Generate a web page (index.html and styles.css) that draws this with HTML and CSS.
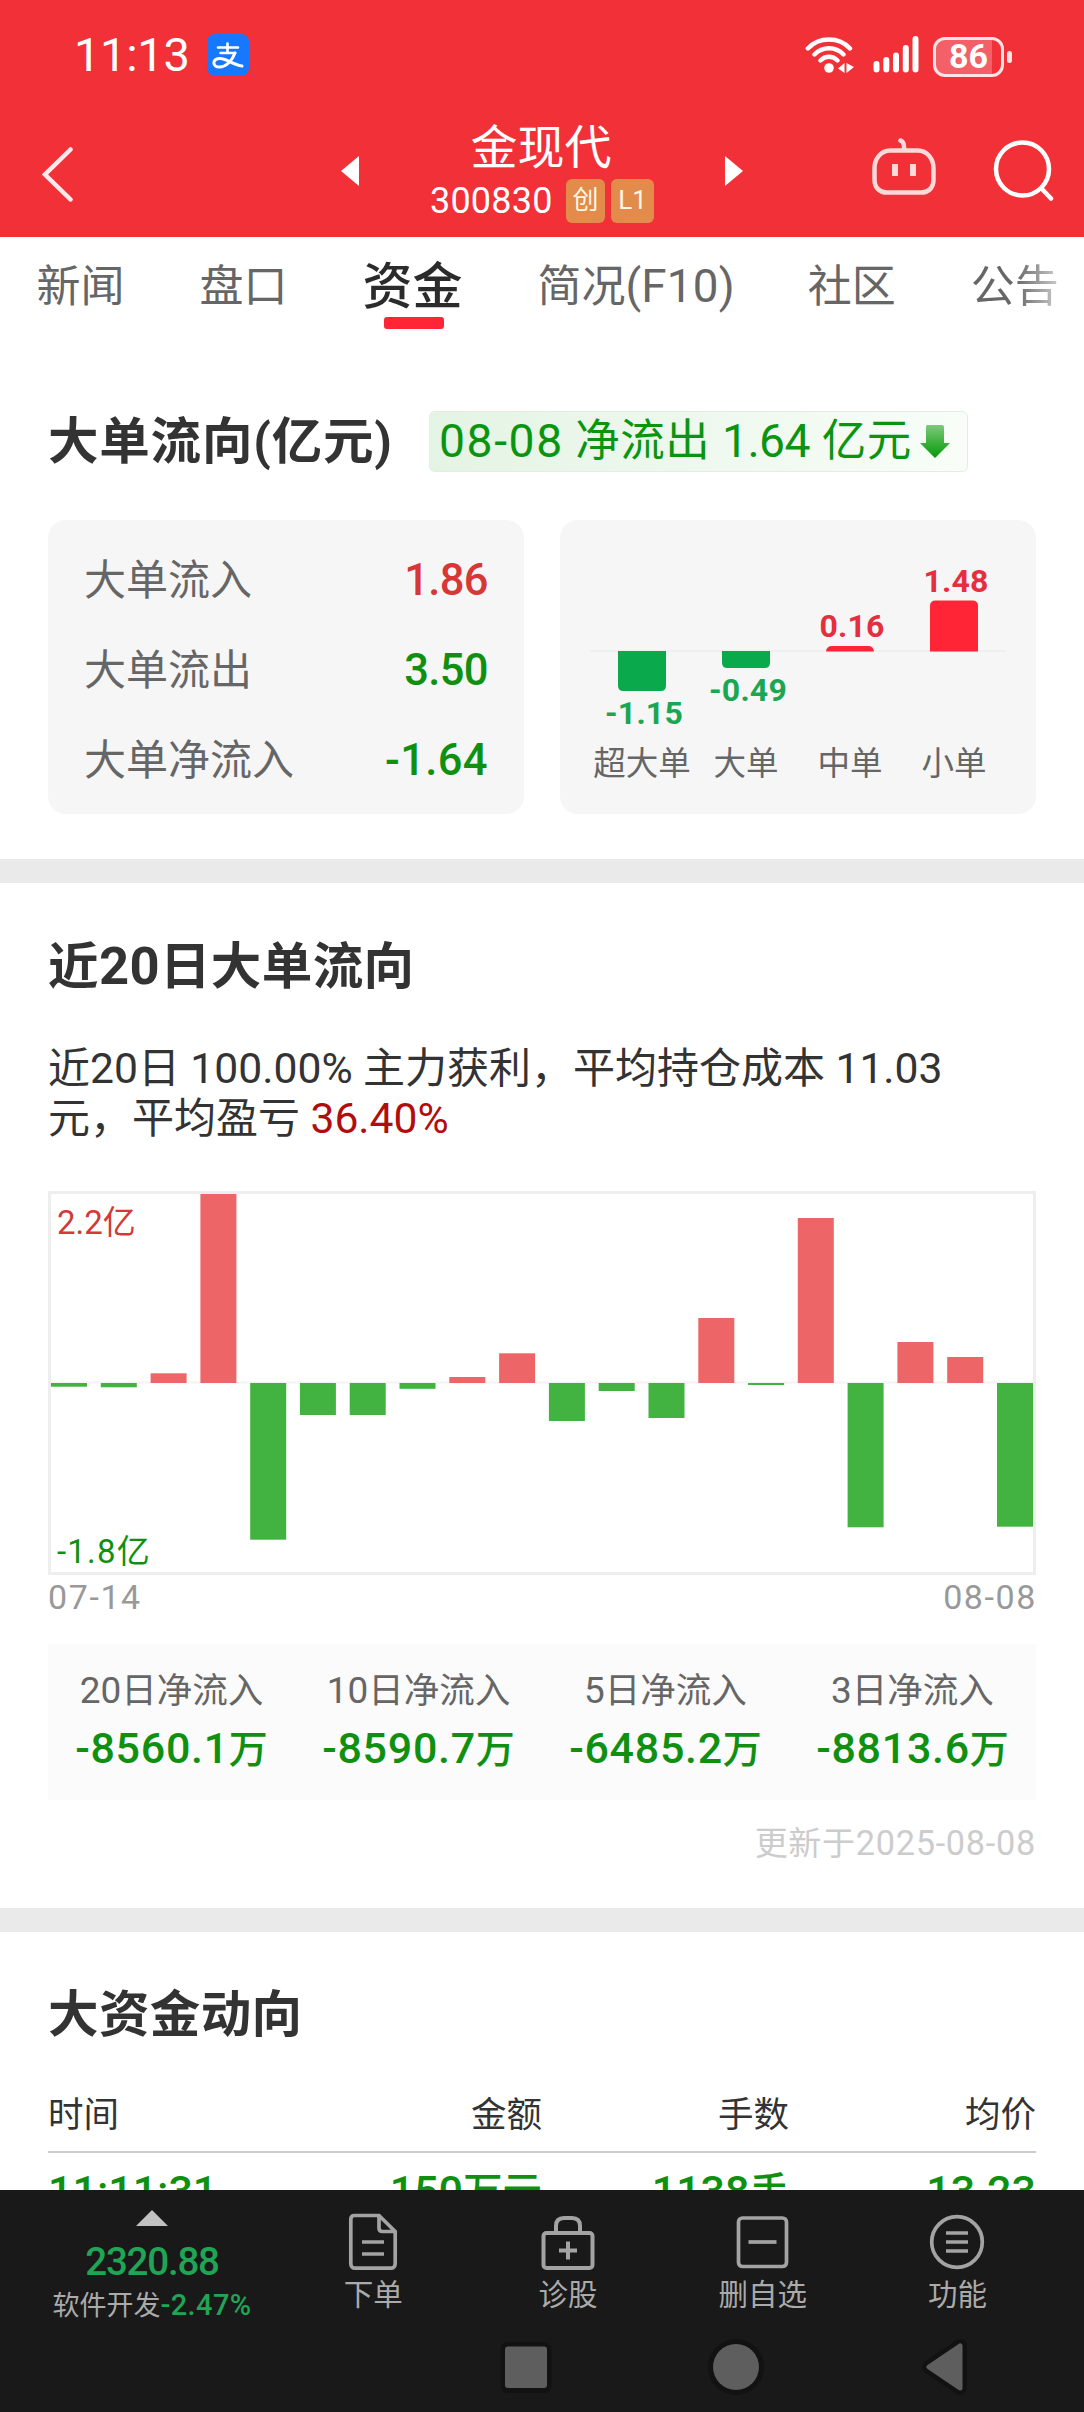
FILE: index.html
```html
<!DOCTYPE html>
<html lang="zh-CN">
<head>
<meta charset="utf-8">
<title>金现代 300830</title>
<link rel="stylesheet" href="styles.css">
</head>
<body>
<header class="header">
  <div class="status">
    <span class="clock">11:13</span>
    <svg class="alipay" width="42" height="42" viewBox="0 0 42 42" fill="none" stroke="#fff" stroke-linecap="round">
      <rect width="42" height="42" rx="8" fill="#1677ff" stroke="none"/>
      <path d="M20.500 9.500V18M11 13.500H31M13.500 19H28" stroke-width="2.600"/>
      <path d="M28 19C25 27 19 33 12.500 33C5 33 5 25 12.500 24.500C19 24 25 30.500 35 32" stroke-width="3"/>
    </svg>
    <div class="status-icons">
      <svg width="50" height="40" viewBox="0 0 50 40" fill="none" stroke="#fff" stroke-width="4.400" stroke-linecap="round">
        <path d="M2.800 13.500C14 1.500 34 1.500 45 13.500M9.500 19.500C17.500 11.200 30.500 11.200 38.500 19.500M15.500 25.500C20.500 20.500 27.500 20.500 32.500 25.500"/>
        <circle cx="24" cy="33" r="4.800" fill="#fff" stroke="none"/>
        <path d="M39.500 28V38L33 33.500ZM41.500 38V28L49 32Z" fill="#fff" stroke="none"/>
      </svg>
      <svg width="46" height="40" viewBox="0 0 46 40" stroke="#fff" stroke-width="6" stroke-linecap="round">
        <path d="M3.500 29V34.500M13.300 25V34.500M23 20.500V34.500M32.800 13V34.500M42.500 4V34.500"/>
      </svg>
      <div class="battery"><span>86</span></div>
    </div>
  </div>
  <div class="titlebar">
    <svg class="back" width="32" height="56" viewBox="0 0 32 56" fill="none" stroke="#fff" stroke-opacity=".9" stroke-width="4.500" stroke-linecap="round"><path d="M28.500 3.500L3 28.500L28.500 53.500"/></svg>
    <svg class="prev" width="18" height="30" viewBox="0 0 18 30"><path d="M18 0V30L0 15Z" fill="#fff"/></svg>
    <div class="stock">
      <h1>金现代</h1>
      <p><span class="code">300830</span><b>创</b><b>L1</b></p>
    </div>
    <svg class="next" width="18" height="30" viewBox="0 0 18 30"><path d="M0 0V30L18 15Z" fill="#fff"/></svg>
    <svg class="robot" width="64" height="58" viewBox="0 0 64 58" fill="none" stroke="#ffd9da" stroke-width="4.500" stroke-linecap="round">
      <path d="M18 12.500H46C55 12.500 61.500 21 61.500 30V42C61.500 50 56 54.500 49 54.500H15C8 54.500 2.500 50 2.500 42V30C2.500 21 9 12.500 18 12.500ZM32 12C32.500 6 31.500 3.500 28.500 2.500"/>
      <path d="M23 26V38M41 26V38" stroke-width="6" stroke-linecap="butt"/>
    </svg>
    <svg class="search" width="62" height="62" viewBox="0 0 62 62" fill="none" stroke="#fff" stroke-width="4.500" stroke-linecap="round"><circle cx="29.500" cy="30" r="26.500"/><path d="M48.500 49.500L58 59.500"/></svg>
  </div>
</header>

<main class="content">
  <nav class="tabs">
    <span>新闻</span><span>盘口</span><span class="active">资金</span><span>简况<i>(F10)</i></span><span>社区</span><span class="fade">公告</span>
  </nav>

  <section class="panel flow">
    <div class="flow-head">
      <h2>大单流向(亿元)</h2>
      <div class="tag"><i class="date">08-08</i> 净流出 <i class="amount">1.64</i> 亿元<svg width="30" height="33" viewBox="0 0 30 33"><defs><linearGradient id="down" x1="0" y1="0" x2="0" y2="1"><stop offset="0" stop-color="#7fca7c"/><stop offset="1" stop-color="#029a05"/></linearGradient></defs><path d="M7 0H22Q24 0 24 2V18H30L15 33L0 18H6V2Q6 0 7 0Z" fill="url(#down)"/></svg></div>
    </div>
    <div class="cards">
      <dl class="card totals">
        <div><dt>大单流入</dt><dd class="up">1.86</dd></div>
        <div><dt>大单流出</dt><dd>3.50</dd></div>
        <div><dt>大单净流入</dt><dd class="net">-1.64</dd></div>
      </dl>
      <svg class="card" width="476" height="294" viewBox="0 0 476 294">
        <path d="M30 131H446" stroke="#ececec" stroke-width="1.500"/>
        <g fill="#0aaa4c">
          <path d="M58 131H106V165.500Q106 171 100.500 171H63.500Q58 171 58 165.500Z"/>
          <path d="M162 131H210V142.500Q210 148 204.500 148H167.500Q162 148 162 142.500Z"/>
        </g>
        <g fill="#ff2537">
          <path d="M266 131.500Q266.500 126 272 126H308Q313.500 126 314 131.500Z"/>
          <path d="M370 131.500V86Q370 80.500 375.500 80.500H412.500Q418 80.500 418 86V131.500Z"/>
        </g>
        <g class="bar-value">
          <text x="84" y="203.500" fill="#1ba653">-1.15</text>
          <text x="188" y="181" fill="#1ba653">-0.49</text>
          <text x="292" y="117" fill="#e62f3e">0.16</text>
          <text x="396" y="72" fill="#e62f3e">1.48</text>
        </g>
        <g class="bar-name">
          <text x="82" y="255">超大单</text><text x="186" y="255">大单</text><text x="290" y="255">中单</text><text x="394" y="255">小单</text>
        </g>
      </svg>
    </div>
  </section>

  <section class="panel history">
    <h2>近<i>20</i>日大单流向</h2>
    <p class="summary">近<i>20</i>日 <i>100.00%</i> 主力获利，平均持仓成本 <i>11.03</i><br>元，平均盈亏 <i class="gain">36.40%</i></p>
    <svg class="chart" width="988" height="384" viewBox="0 0 988 384">
      <rect x="1.500" y="1.500" width="985" height="381" fill="none" stroke="#eee" stroke-width="3"/>
      <path d="M3 191.500H985" stroke="#f4f4f4" stroke-width="2"/>
      <g fill="#ee6567">
        <rect x="102.600" y="182.300" width="36" height="9.700"/>
        <rect x="152.400" y="3" width="36" height="189"/>
        <rect x="401.300" y="186" width="36" height="6"/>
        <rect x="451.100" y="162.300" width="36" height="29.700"/>
        <rect x="650.300" y="127" width="36" height="65"/>
        <rect x="749.800" y="27" width="36" height="165"/>
        <rect x="849.400" y="151" width="36" height="41"/>
        <rect x="899.200" y="166" width="36" height="26"/>
      </g>
      <g fill="#42b340">
        <rect x="3" y="192" width="36" height="3.700"/>
        <rect x="52.800" y="192" width="36" height="4.300"/>
        <rect x="202.200" y="192" width="36" height="156.700"/>
        <rect x="251.900" y="192" width="36" height="32"/>
        <rect x="301.700" y="192" width="36" height="32"/>
        <rect x="351.500" y="192" width="36" height="5.800"/>
        <rect x="500.900" y="192" width="36" height="38"/>
        <rect x="550.700" y="192" width="36" height="8"/>
        <rect x="600.500" y="192" width="36" height="35"/>
        <rect x="700.100" y="192" width="36" height="2"/>
        <rect x="799.600" y="192" width="36" height="144.300"/>
        <rect x="949" y="192" width="36" height="143.700"/>
      </g>
      <text x="9" y="42.500" fill="#d03a38">2.2亿</text>
      <text class="low" x="9" y="372" fill="#0f910f">-1.8亿</text>
    </svg>
    <div class="range"><span>07-14</span><span>08-08</span></div>
    <div class="stats">
      <div><span><i>20</i>日净流入</span><strong><i>-8560.1</i>万</strong></div>
      <div><span><i>10</i>日净流入</span><strong><i>-8590.7</i>万</strong></div>
      <div><span><i>5</i>日净流入</span><strong><i>-6485.2</i>万</strong></div>
      <div><span><i>3</i>日净流入</span><strong><i>-8813.6</i>万</strong></div>
    </div>
    <p class="updated">更新于<i>2025-08-08</i></p>
  </section>

  <section class="panel trades">
    <h2>大资金动向</h2>
    <div class="row head"><span>时间</span><span>金额</span><span>手数</span><span>均价</span></div>
    <div class="row"><span><i>11:11:31</i></span><span><i>150</i>万元</span><span><i>1138</i>手</span><span><i>13.23</i></span></div>
  </section>
</main>

<footer class="footer">
  <div class="toolbar">
    <div class="sector">
      <svg width="32" height="16" viewBox="0 0 32 16"><path d="M16 0L32 16H0Z" fill="#c2c2c2"/></svg>
      <strong>2320.88</strong>
      <span>软件开发<em>-2.47%</em></span>
    </div>
    <div class="tool">
      <svg width="60" height="60" viewBox="0 0 60 60" fill="none" stroke="#a3a3a3" stroke-width="3.700"><path d="M11.500 3.500H36L52.200 19.500V51.500Q52.200 56.200 47.500 56.200H12.500Q7.800 56.200 7.800 51.500V7.500Q7.800 3.500 11.500 3.500ZM36 3.500V16Q36 19.500 39.500 19.500H52M19 30H41M19 42H41"/></svg>
      <span>下单</span>
    </div>
    <div class="tool">
      <svg width="60" height="60" viewBox="0 0 60 60" fill="none" stroke="#a3a3a3" stroke-width="4"><rect x="5.500" y="21" width="49" height="35" rx="3"/><path d="M18 21V14Q18 6 26 6H34Q42 6 42 14V21M21 38.500H39M30 29.500V47.500"/></svg>
      <span>诊股</span>
    </div>
    <div class="tool">
      <svg width="60" height="60" viewBox="0 0 60 60" fill="none" stroke="#a3a3a3" stroke-width="3.700"><rect x="5.500" y="6" width="48" height="48.500" rx="4"/><path d="M15.500 30H43.500"/></svg>
      <span>删自选</span>
    </div>
    <div class="tool">
      <svg width="60" height="60" viewBox="0 0 60 60" fill="none" stroke="#a3a3a3" stroke-width="3.700"><circle cx="30" cy="30" r="25.300"/><path d="M19 21H41M19 30H41M19 39H41"/></svg>
      <span>功能</span>
    </div>
  </div>
  <div class="sysnav">
    <svg width="58" height="58" viewBox="0 0 58 58"><rect x="3.500" y="4" width="51" height="51" rx="7" fill="#121212"/><rect x="8" y="8.500" width="42" height="41.500" rx="3" fill="#5e5e5e"/></svg>
    <svg width="58" height="58" viewBox="0 0 58 58"><circle cx="29" cy="29" r="28" fill="#121212"/><circle cx="29" cy="29" r="23" fill="#5e5e5e"/></svg>
    <svg width="58" height="58" viewBox="0 0 58 58" stroke-linejoin="round"><path d="M12 29L43 8V50Z" fill="#121212" stroke="#121212" stroke-width="14"/><path d="M12 29L43 8V50Z" fill="#5e5e5e" stroke="#5e5e5e" stroke-width="5"/></svg>
  </div>
</footer>
</body>
</html>
```
FILE: styles.css
```css
* { box-sizing: border-box; margin: 0; padding: 0; }
body {
  width: 1084px;
  height: 2412px;
  display: flex;
  flex-direction: column;
  overflow: hidden;
  background: #fff;
  color: #333;
  font-family: Roboto, "Noto Sans CJK SC", sans-serif;
}
svg { display: block; flex: none; }
i, em { font-style: normal; }
i { font-size: 1.04em; }

.header { height: 236.5px; background: #f23037; color: #fff; }
.status { height: 110px; display: flex; align-items: center; padding: 0 73px 0 74px; }
.clock { font-size: 47px; line-height: 60px; letter-spacing: -.3px; }
.alipay { margin-left: 17.5px; }
.status-icons { display: flex; align-items: center; margin-left: auto; gap: 19px; }
.status-icons svg + svg { margin-left: -1px; }
.battery {
  position: relative;
  width: 71px; height: 40px;
  margin: 4px 7px 0 -5px;
  border: 3.5px solid #ffe4e5;
  border-radius: 12px;
  background: linear-gradient(90deg, #f46067 86%, #f23037 86%);
  font: bold 34px/33px Roboto, sans-serif;
  text-align: center;
}
.battery::after {
  content: "";
  position: absolute;
  right: -11px; top: 11px;
  width: 5px; height: 12px;
  border-radius: 3px;
  background: #ffe4e5;
}

.titlebar { height: 126px; display: flex; align-items: flex-start; padding: 0 29px 0 42px; }
.back { margin-top: 36px; }
.prev { margin: 46px 0 0 267px; }
.stock { width: 224px; margin: 0 71px; }
.stock h1 { margin: 10px 0 0 -2px; font-size: 47px; font-weight: 400; line-height: 56px; text-align: center; }
.stock p { display: flex; align-items: center; margin-top: 3px; height: 44px; white-space: nowrap; }
.code { width: 136px; font-size: 36px; letter-spacing: .2px; }
.stock b {
  width: 39px; height: 44px;
  border-radius: 6px;
  background: #e28b4a;
  color: #fff6e3;
  font-size: 26px; font-weight: 400; line-height: 43px;
  text-align: center;
}
.stock b + b { width: 43px; margin-left: 6px; }
.next { margin-top: 46px; }
.robot { margin: 28px 0 0 129px; }
.search { margin: 29px 0 0 auto; }

.content { flex: 1; min-height: 0; overflow: hidden; }
.tabs { height: 125.5px; display: flex; gap: 75px; padding-left: 36.5px; color: #666; font-size: 44px; line-height: 100px; white-space: nowrap; }
.tabs i { margin-right: -2px; letter-spacing: .2px; }
.tabs .active { position: relative; color: #2b2b2b; font-size: 50px; font-weight: 500; }
.tabs .active::after {
  content: "";
  position: absolute;
  left: 21px; top: 80.5px;
  width: 60px; height: 12px;
  border-radius: 3px;
  background: #ff2436;
}
.tabs .fade { background: linear-gradient(90deg, #666 50%, #ccc); -webkit-background-clip: text; background-clip: text; color: transparent; }

.panel { padding: 0 48px; border-bottom: 24px solid #eaeaea; }
h2 { font-size: 50.5px; font-weight: 700; line-height: 60px; letter-spacing: .4px; white-space: nowrap; }

.flow { height: 521px; padding-top: 49px; }
.flow-head { display: flex; align-items: center; height: 61px; }
.flow-head h2 { width: 381px; letter-spacing: .8px; }
.tag {
  display: flex; align-items: center;
  width: 539px; height: 61px;
  padding: 0 0 2px 9px;
  border: 1px solid #e6ebe6;
  border-radius: 6px;
  background: linear-gradient(90deg, #e4f4e4, #f8fdf8);
  color: #0a9410;
  font-size: 44.5px;
  line-height: 56px;
  letter-spacing: .5px;
  white-space: pre;
}
.tag .date { letter-spacing: 1.6px; }
.tag .amount { letter-spacing: -.5px; }
.tag svg { margin: 2px 0 0 8px; }
.cards { display: flex; justify-content: space-between; margin-top: 48px; }
.card { width: 476px; height: 294px; border-radius: 18px; background: #f6f6f6; }
.totals { padding: 15.5px 36px 0 36px; }
.totals div { display: flex; justify-content: space-between; height: 90px; line-height: 90px; }
.totals dt { color: #666; font-size: 42px; }
.totals dd { color: #109010; font-size: 43.5px; font-weight: 500; letter-spacing: -.6px; }
.totals dd.net { letter-spacing: .4px; }
.totals dd.up { color: #d73737; }
.bar-value { font-size: 32px; font-weight: 700; letter-spacing: .2px; text-anchor: middle; }
.bar-name { fill: #666; font-size: 32.5px; text-anchor: middle; }

.history { height: 1049px; padding-top: 53px; }
.summary { margin-top: 47px; font-size: 42px; line-height: 49.5px; white-space: nowrap; }
.summary i { font-size: 1.015em; }
.gain { color: #b00e0e; }
.chart { margin-top: 48px; font-size: 33px; }
.chart .low { letter-spacing: 1.2px; }
.range { display: flex; justify-content: space-between; height: 69px; color: #999; font-size: 34px; line-height: 44px; letter-spacing: 1.6px; }
.range span:last-child { margin-right: -1px; }
.stats { display: grid; grid-template-columns: repeat(4, 1fr); height: 156px; padding-top: 18px; background: #fbfbfb; text-align: center; }
.stats span { display: block; color: #666; font-size: 35.5px; line-height: 58px; }
.stats strong { display: block; color: #109010; font-size: 39px; font-weight: 500; line-height: 57px; }
.stats strong i { font-size: 43px; letter-spacing: .7px; }
.updated { color: #ccc; font-size: 33px; line-height: 86px; letter-spacing: .7px; text-align: right; }

.trades { padding-top: 53px; border: 0; }
.row { display: grid; grid-template-columns: repeat(4, 1fr); color: #109010; font-size: 39.5px; font-weight: 500; line-height: 76px; text-align: right; white-space: nowrap; }
.row span:first-child { text-align: left; }
.row i { font-size: 43px; }
.row.head { height: 76px; margin-top: 32px; border-bottom: 2px solid #ccc; color: #333; font-size: 35.5px; font-weight: 400; }

.footer { height: 222px; background: #191919; color: #aaa; }
.toolbar { display: grid; grid-template-columns: 248px repeat(4, 194.7px); padding-left: 28px; height: 148px; }
.sector { display: flex; flex-direction: column; align-items: center; padding-top: 20px; white-space: nowrap; }
.sector strong { margin-top: 13px; color: #1fa556; font-size: 38.5px; font-weight: 500; line-height: 46px; letter-spacing: -1.2px; }
.sector span { font-size: 27px; line-height: 41px; }
.sector em { color: #1fa556; font-size: 29px; font-weight: 500; letter-spacing: .4px; }
.tool { display: flex; flex-direction: column; align-items: center; padding-top: 22px; font-size: 29.5px; }
.tool span { margin-top: 3px; line-height: 40px; }
.sysnav { display: flex; gap: 152px; padding-left: 497px; }
```
